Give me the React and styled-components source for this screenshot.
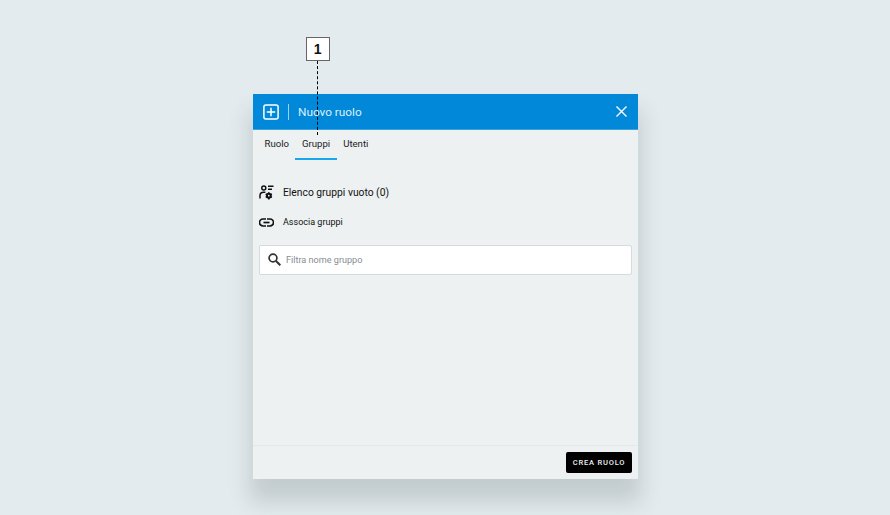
import React from 'react';
import styled, {createGlobalStyle} from 'styled-components';

const GlobalStyle = createGlobalStyle`
  html, body {
    margin: 0;
    padding: 0;
    background: #e3ebee;
  }
  * {
    box-sizing: border-box;
  }
`

const TABS = ["Ruolo", "Gruppi", "Utenti"];

// user with gear + list lines
function GroupsIcon() {
  return (<svg width="15" height="15" viewBox="0 0 15 15" fill="none" stroke="#111" strokeWidth="1.5">
    <circle cx="4.8" cy="3" r="2"/>
    <path d="M1 13.5V10.5C1 8.6 2.5 7.2 4.6 7.2H6.4"/>
    <path d="M9 1.2H14.5M9 4.2H13"/>
    <circle cx="9.8" cy="10.7" r="1.9" strokeWidth="2.1"/>
    <path d="M9.8 7.2V8.4M9.8 13V14.4M6.7 9L7.8 9.6M11.8 11.8L12.9 12.4M6.7 12.4L7.8 11.8M11.8 9.6L12.9 9" strokeWidth="1.6"/>
  </svg>);
}

// chain link, two halves and a bar through the middle
function LinkIcon() {
  return (<svg width="15" height="9" viewBox="0 0 15 9" fill="none" stroke="#111" strokeWidth="1.7">
    <path d="M7 1H4A3.5 3.5 0 0 0 4 8H7"/>
    <path d="M8 1H11A3.5 3.5 0 0 1 11 8H8"/>
    <path d="M4.5 4.5H10.5"/>
  </svg>);
}

function SearchIcon() {
  return (<svg width="13" height="13" viewBox="0 0 13 13" fill="none" stroke="#333" strokeWidth="1.7">
    <circle cx="5" cy="5" r="3.9"/>
    <path d="M8 8L12.3 12.3" strokeWidth="2"/>
  </svg>);
}

export default function App() {
  return (<Page>
    <GlobalStyle/>
    <Modal>
      <Header>
        <svg width="16" height="16" viewBox="0 0 16 16" fill="none" stroke="#fff" strokeWidth="1.5">
          <rect x="0.9" y="0.9" width="14.2" height="14.2" rx="2"/>
          <path d="M8 3.8V12.2M3.8 8H12.2"/>
        </svg>
        <HeaderDivider/>
        <Title>Nuovo ruolo</Title>
        <CloseButton>
          <svg width="11" height="11" viewBox="0 0 11 11" stroke="#fff" strokeWidth="1.4">
            <path d="M0.5 0.5L10.5 10.5M10.5 0.5L0.5 10.5"/>
          </svg>
        </CloseButton>
      </Header>

      <Tabs>
        {TABS.map(tab => <Tab key={tab} $active={tab === "Gruppi"}>{tab}</Tab>)}
      </Tabs>

      <Body>
        <ListTitle>
          <IconSlot><GroupsIcon/></IconSlot>
          Elenco gruppi vuoto (0)
        </ListTitle>
        <LinkRow>
          <IconSlot><LinkIcon/></IconSlot>
          Associa gruppi
        </LinkRow>
        <SearchBox>
          <SearchIcon/>
          <SearchText>Filtra nome gruppo</SearchText>
        </SearchBox>
      </Body>

      <Footer>
        <CreateButton>CREA RUOLO</CreateButton>
      </Footer>

      {/* numbered annotation over the modal */}
      <Callout>
        <CalloutBox>1</CalloutBox>
        <CalloutLine/>
      </Callout>
    </Modal>
  </Page>);
}

const Page = styled.div `
  width: 890px;
  height: 515px;
  overflow: hidden;
  padding: 94px 0 0 253px;
  background: #e3ebee;
  font-family: Roboto, "Liberation Sans", sans-serif;
`

const Modal = styled.div `
  position: relative;
  width: 385px;
  height: 385px;
  display: flex;
  flex-direction: column;
  background: #edf1f2;
  box-shadow: 0 20px 20px 3px rgba(40, 55, 60, 0.17);
`

const Header = styled.div `
  height: 36px;
  flex-shrink: 0;
  display: flex;
  align-items: center;
  padding: 0 11px 0 10px;
  background: #0288d9;
  border-bottom: 1px solid #3aa3e3;
`

const HeaderDivider = styled.div `
  width: 1px;
  height: 16px;
  margin: 0 9px 0 9px;
  background: #9fd2f0;
`

const Title = styled.div `
  flex-grow: 1;
  font-size: 11.8px;
  color: #dcf0fb;
`

const CloseButton = styled.div `
  display: flex;
`

const Tabs = styled.div `
  height: 30px;
  flex-shrink: 0;
  display: flex;
  padding-left: 5px;
`

const Tab = styled.div `
  height: 30px;
  padding: 8px 6.5px 0;
  font-size: 9.6px;
  line-height: 12px;
  color: #222;
  border-bottom: 2px solid ${props => props.$active ? '#18a7ea' : 'transparent'};
`

const Body = styled.div `
  flex-grow: 1;
  display: flex;
  flex-direction: column;
  padding: 24px 6px 0 6px;
`

const ListTitle = styled.div `
  display: flex;
  align-items: center;
  height: 16px;
  font-size: 10.3px;
  color: #111;
`

const LinkRow = styled.div `
  display: flex;
  align-items: center;
  height: 14px;
  margin-top: 15px;
  font-size: 9px;
  color: #111;
`

const IconSlot = styled.div `
  width: 24px;
  display: flex;
  align-items: center;
`

const SearchBox = styled.div `
  height: 30px;
  margin-top: 15.5px;
  display: flex;
  align-items: center;
  gap: 5px;
  padding-left: 8px;
  background: #fff;
  border: 1px solid #d5dadc;
  border-radius: 2px;
`

const SearchText = styled.span `
  font-size: 9.1px;
  color: #868d92;
  line-height: 12px;
`

const Footer = styled.div `
  height: 34px;
  flex-shrink: 0;
  display: flex;
  justify-content: flex-end;
  align-items: flex-start;
  padding: 6px 6px 0 0;
  border-top: 1px solid #e4e8ea;
`

const CreateButton = styled.div `
  width: 66px;
  height: 21px;
  display: flex;
  align-items: center;
  justify-content: center;
  background: #000;
  border-radius: 2px;
  font-family: Roboto, sans-serif;
  font-size: 7.5px;
  font-weight: 500;
  letter-spacing: 0.8px;
  color: #f0f0f0;
`

const Callout = styled.div `
  position: absolute;
  left: 53px;
  top: -57px;
  display: flex;
  flex-direction: column;
  align-items: center;
`

const CalloutBox = styled.div `
  width: 23.5px;
  height: 23.5px;
  display: flex;
  align-items: center;
  justify-content: center;
  background: #fff;
  border: 1px solid #666;
  font-family: "Liberation Sans", sans-serif;
  font-size: 14px;
  font-weight: 700;
  color: #111;
`

const CalloutLine = styled.div `
  height: 74px;
  border-left: 1px dashed #000;
`
